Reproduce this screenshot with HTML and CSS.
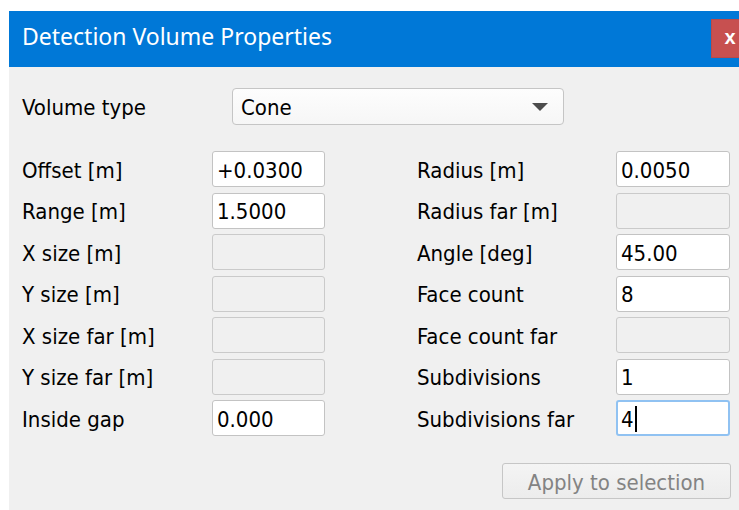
FILE: index.html
```html
<!DOCTYPE html>
<html lang="en">
<head>
<meta charset="utf-8">
<title>Detection Volume Properties</title>
<link rel="stylesheet" href="styles.css">
</head>
<body>
<div class="window">
  <div class="titlebar">
    <span class="title">Detection Volume Properties</span>
    <button class="close" type="button">x</button>
  </div>
  <div class="content">
    <div class="type-row">
      <span class="label">Volume type</span>
      <div class="combo">
        <span class="combo-value">Cone</span>
        <span class="combo-arrow"></span>
      </div>
    </div>
    <div class="fields">
      <div class="group group-left">
        <span class="label">Offset [m]</span><input class="field" value="+0.0300">
        <span class="label">Range [m]</span><input class="field" value="1.5000">
        <span class="label">X size [m]</span><input class="field" disabled>
        <span class="label">Y size [m]</span><input class="field" disabled>
        <span class="label">X size far [m]</span><input class="field" disabled>
        <span class="label">Y size far [m]</span><input class="field" disabled>
        <span class="label">Inside gap</span><input class="field" value="0.000">
      </div>
      <div class="group group-right">
        <span class="label">Radius [m]</span><input class="field" value="0.0050">
        <span class="label">Radius far [m]</span><input class="field" disabled>
        <span class="label">Angle [deg]</span><input class="field" value="45.00">
        <span class="label">Face count</span><input class="field" value="8">
        <span class="label">Face count far</span><input class="field" disabled>
        <span class="label">Subdivisions</span><input class="field" value="1">
        <span class="label">Subdivisions far</span><div class="field field-focus">4<span class="caret"></span></div>
      </div>
    </div>
    <div class="actions">
      <button class="apply" type="button" disabled>Apply to selection</button>
    </div>
  </div>
</div>
</body>
</html>
```

FILE: styles.css
```css
html, body {
  margin: 0;
  padding: 0;
  background: #ffffff;
  overflow: hidden;
}

body {
  width: 739px;
  height: 510px;
}

.window {
  margin: 11px 0 0 9px;
  width: 740px;
  font-family: "DejaVu Sans Condensed", "DejaVu Sans", sans-serif;
  font-stretch: semi-condensed;
  font-size: 22px;
  color: #000;
}

/* Title bar */
.titlebar {
  height: 56px;
  background: #0078d7;
  display: flex;
  align-items: flex-start;
  justify-content: space-between;
}

.title {
  font-family: "Noto Sans", "Liberation Sans", sans-serif;
  font-stretch: normal;
  font-size: 23px;
  color: #fff;
  padding: 10px 0 0 13px;
  line-height: 30px;
}

.close {
  margin-top: 8px;
  width: 38px;
  height: 39px;
  border: 1px solid #b84a4a;
  background: #c75050;
  color: #fff;
  font-family: "Liberation Sans", sans-serif;
  font-weight: bold;
  font-size: 20px;
  padding: 0 0 4px;
  line-height: 1;
}

/* Dialog body */
.content {
  background: #f0f0f0;
  height: 443px;
  padding: 21px 0 0 13px;
  box-sizing: border-box;
}

.label {
  line-height: 36px;
  padding-top: 3px;
  white-space: nowrap;
}

.type-row {
  display: flex;
  align-items: center;
  height: 37px;
}

.type-row .label {
  width: 210px;
}

.combo {
  width: 332px;
  height: 37px;
  box-sizing: border-box;
  border: 1px solid #c5c5c5;
  border-radius: 4px;
  background: linear-gradient(#fdfdfd, #f6f6f6);
  display: flex;
  align-items: center;
  justify-content: space-between;
  padding: 2px 15px 0 8px;
}

.combo-arrow {
  width: 0;
  height: 0;
  border-left: 8px solid transparent;
  border-right: 8px solid transparent;
  border-top: 8px solid #4c4c4c;
  margin-top: -1px;
}

/* Field grid */
.fields {
  display: flex;
  gap: 92px;
  margin-top: 26px;
}

.group {
  display: grid;
  grid-auto-rows: 36px;
  row-gap: 5.5px;
  align-items: center;
}

.group-left {
  grid-template-columns: 190px 113px;
}

.group-right {
  grid-template-columns: 199px 114px;
}

.field {
  height: 36px;
  width: 100%;
  box-sizing: border-box;
  margin: 0;
  border: 1px solid #c3c3c3;
  border-radius: 3px;
  background: #fff;
  padding: 2px 4px 0;
  font: inherit;
  font-stretch: inherit;
  color: #000;
  outline: none;
}

.field:disabled {
  background: #f0f0f0;
  border-color: #cacaca;
}

.field-focus {
  display: flex;
  align-items: center;
  border: 2px solid #90c2f2;
  padding-left: 3px;
}

.caret {
  display: inline-block;
  width: 2px;
  height: 26px;
  background: #000;
  margin-left: 1px;
}

/* Footer */
.actions {
  display: flex;
  justify-content: flex-end;
  padding-right: 18px;
  margin-top: 27px;
}

.apply {
  width: 229px;
  height: 36px;
  border: 1px solid #c6c6c6;
  border-radius: 3px;
  background: linear-gradient(#f4f4f4, #ececec);
  color: #838383;
  font: inherit;
  font-stretch: inherit;
  padding: 2px 0 0;
}
```
